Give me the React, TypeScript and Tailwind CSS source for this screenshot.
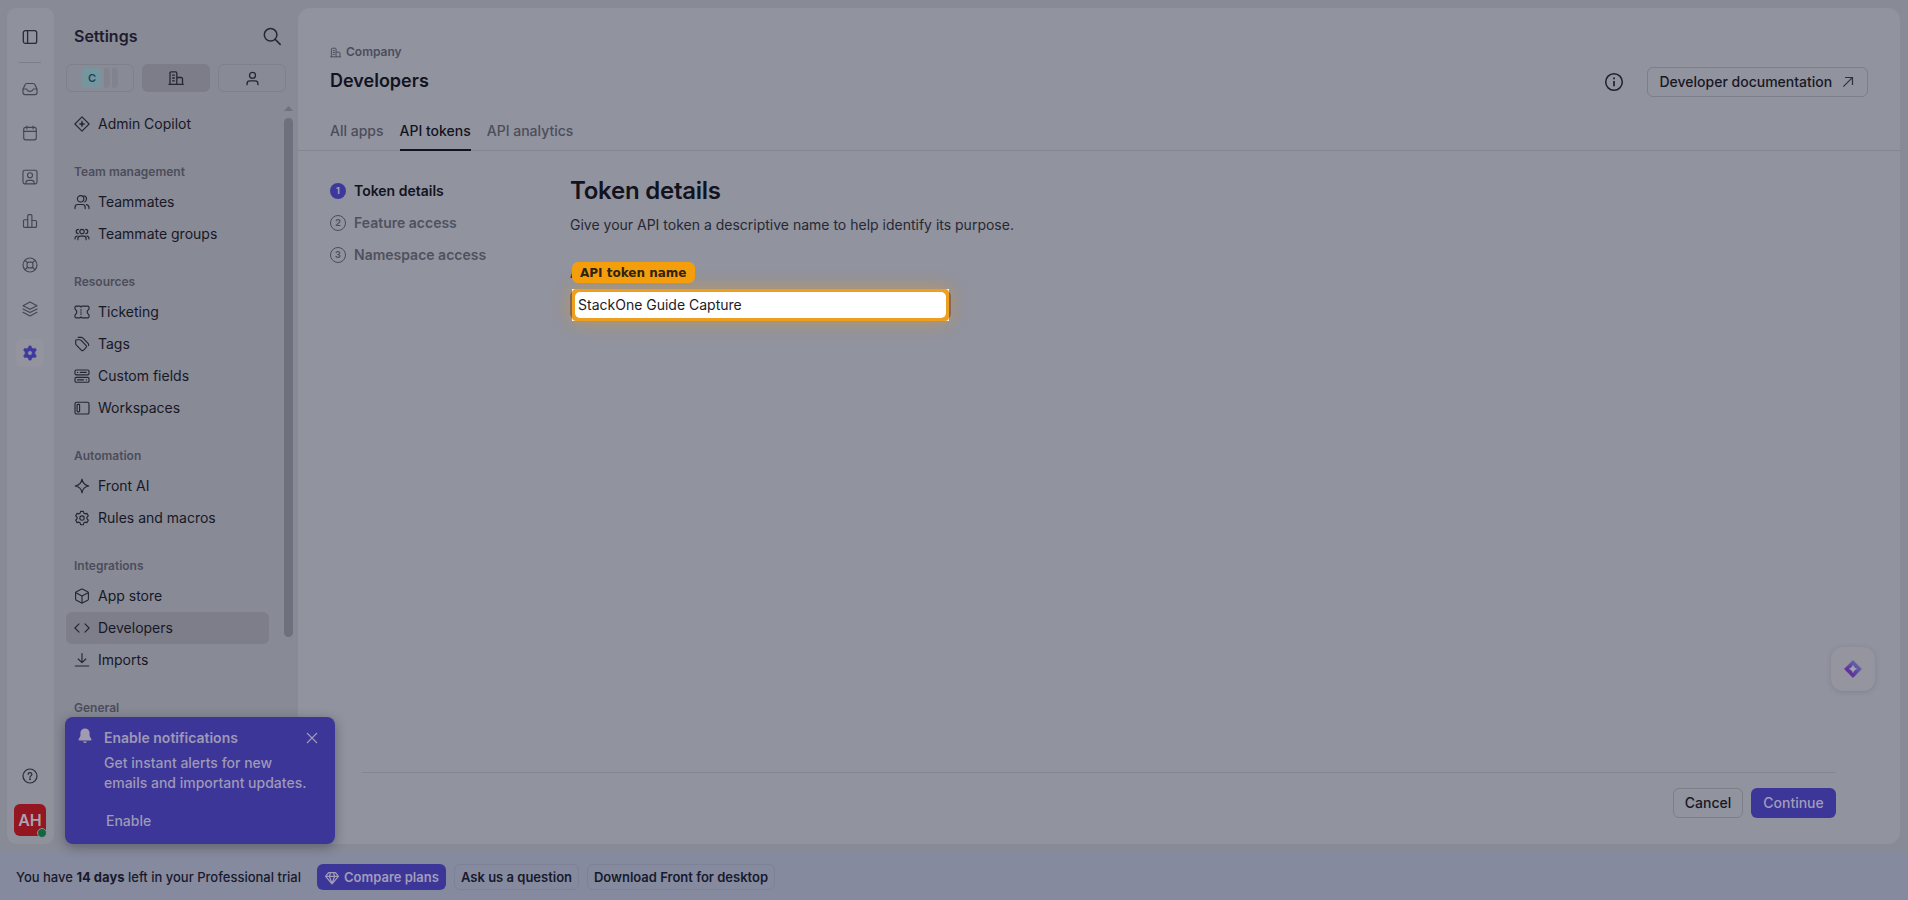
import React from "react";

type IconProps = { className?: string; children?: React.ReactNode; sw?: number };

function Icon({ className = "size-4", children, sw = 1.15 }: IconProps) {
  return (
    <svg
      viewBox="0 0 16 16"
      fill="none"
      stroke="currentColor"
      strokeWidth={sw}
      strokeLinecap="round"
      strokeLinejoin="round"
      className={`shrink-0 ${className}`}
    >
      {children}
    </svg>
  );
}

const GEAR =
  "M6.6 1.3h2.8l.5 1.9 1.1.65 1.9-.5 1.4 2.4L12.9 7.3v1.4l1.4 1.55-1.4 2.4-1.9-.5-1.1.65-.5 1.9H6.6l-.5-1.9L5 12.15l-1.9.5-1.4-2.4L3.1 8.7V7.3L1.7 5.75l1.4-2.4 1.9.5 1.1-.65z";

const ICONS = {
  panel: (
    <>
      <rect x="1.3" y="1.6" width="13.4" height="12.8" rx="2.2" />
      <path d="M5.6 1.6v12.8" />
    </>
  ),
  inbox: (
    <>
      <path d="M1 8.3 3 3.800Q3.500 2.500 4.900 2.500h6.200q1.400 0 1.900 1.300l2 4.500v3.300q0 2-2 2H3q-2 0-2-2z" />
      <path d="M1.200 8h3q.6 0 .9.8.7 1.600 2.900 1.600t2.900-1.600q.3-.8.9-.8h3" />
    </>
  ),
  calendar: (
    <>
      <rect x="1.7" y="2.4" width="12.6" height="12.4" rx="2" />
      <path d="M1.7 6.3h12.6M4.9 1v2.8M11.1 1v2.8" />
    </>
  ),
  contact: (
    <>
      <rect x="1" y="1.2" width="14" height="13.6" rx="1.8" />
      <circle cx="8" cy="6.2" r="2.5" />
      <path d="M3.9 14.6v-.9q0-2.4 2.4-2.4h3.4q2.4 0 2.4 2.4v.9" />
    </>
  ),
  chart: (
    <>
      <path d="M5.7 14.4H2.5q-1 0-1-1V7.7q0-1 1-1h3.2" />
      <path d="M5.7 14.4V2.6q0-1 1-1h2.2q1 0 1 1v11.8z" />
      <path d="M9.9 7.5h3.6q1 0 1 1v4.9q0 1-1 1H9.9" />
    </>
  ),
  ring: (
    <>
      <circle cx="8" cy="8" r="7" />
      <rect x="5.1" y="5.1" width="5.8" height="5.8" rx="2" />
      <path d="m3 3.4 2.6 2.3M13 3.4l-2.6 2.3M3 12.6l2.6-2.3M13 12.6l-2.6-2.3" />
    </>
  ),
  layers: (
    <>
      <path d="M8 1.1 15 4.7 8 8.3 1 4.7z" />
      <path d="m1 8 7 3.5L15 8M1 11.3l7 3.6 7-3.6" />
    </>
  ),
  help: (
    <>
      <circle cx="8" cy="8" r="7" />
      <path d="M6.1 6.4Q6.2 4.6 8 4.6t1.9 1.7Q9.9 7.4 8.7 8 8 8.4 8 9.3" />
      <circle cx="8" cy="11.3" r=".4" fill="currentColor" />
    </>
  ),
  building: (
    <>
      <path d="M2 14.2V3q0-1.2 1.2-1.2h4.4q1.2 0 1.2 1.2v11.2M8.8 7.5h4.5q1.2 0 1.2 1.2v5.5M.9 14.3h14.4" />
      <path d="M4.6 5.2h1.8M4.6 8h1.8M4.6 10.8h1.8" />
    </>
  ),
  person: (
    <>
      <circle cx="8" cy="4.6" r="3.2" />
      <path d="M2.2 14.6v-1q0-3 3-3h5.6q3 0 3 3v1" />
    </>
  ),
  copilot: (
    <>
      <path d="M8 .9 15.1 8 8 15.1.9 8z" />
      <path d="M8 5.1 8.8 7.2 10.9 8 8.8 8.8 8 10.9 7.2 8.8 5.1 8 7.2 7.2z" fill="currentColor" strokeWidth=".5" />
    </>
  ),
  teammates: (
    <>
      <circle cx="6.6" cy="4.8" r="3.2" />
      <path d="M1 14.6v-1.2q0-2.900 2.900-2.900h4.400q2.900 0 2.900 2.900v1.200M10 1.700q2.500.6 2.500 3.100T10.600 8M12.400 10.600q2.600.5 2.600 3v1" />
    </>
  ),
  groups: (
    <>
      <circle cx="8" cy="5.6" r="2.2" />
      <path d="M3.9 13.7v-1.2q0-2.4 2.4-2.4h3.4q2.4 0 2.4 2.4v1.2M4.4 3.4Q2.2 3.5 2.2 5.5t2 2.1M11.6 3.4q2.2.1 2.2 2.1t-2 2.1M3.2 10Q1 10.3 1 12.6v.3M12.8 10q2.2.3 2.2 2.6v.3" />
    </>
  ),
  ticket: (
    <>
      <path d="M2.200 2.100h3.600q.5 0 .7.4l.5.7.5-.7q.2-.4.7-.4h5.600q1.200 0 1.200 1.200v1.500q0 .6-.6 1-1.200.7-1.200 2.200t1.200 2.200q.6.4.6 1v1.500q0 1.200-1.200 1.200H8.200q-.5 0-.7-.4l-.5-.7-.5.7q-.2.4-.7.4H2.200Q1 13.900 1 12.700v-1.500q0-.6.600-1 1.200-.7 1.200-2.200T1.600 5.800Q1 5.400 1 4.800V3.300q0-1.200 1.200-1.200z" />
      <path d="M7 5.600v.6M7 7.700v.6M7 9.800v.6" />
    </>
  ),
  tags: (
    <>
      <path d="M1.700 4.600v3.100q0 .7.500 1.200l5.300 5.400q.9.800 1.800 0l2.900-2.900q.8-.9 0-1.800L6.900 4.200q-.5-.5-1.200-.5H2.700q-1 0-1 .9z" />
      <path d="M4.200 1.400h3.400q.6 0 1.100.5l5.400 5.500q.9.900.4 2" />
    </>
  ),
  fields: (
    <>
      <rect x="1" y="2" width="14" height="4.9" rx="1.3" />
      <rect x="1" y="9.3" width="14" height="4.9" rx="1.3" />
      <path d="M3.500 4.400h.2M6.300 4.400h6M3.500 11.800h6M12.300 11.800h.2" />
    </>
  ),
  workspaces: (
    <>
      <rect x="1" y="2.2" width="14" height="11.8" rx="1.6" />
      <rect x="3.1" y="4.4" width="2.5" height="7.4" rx=".7" />
    </>
  ),
  sparkle: <path d="M8 1.200Q8.900 7.100 14.800 8 8.900 8.900 8 14.800 7.100 8.900 1.200 8 7.100 7.100 8 1.200z" />,
  gear: (
    <>
      <path d={GEAR} />
      <circle cx="8" cy="8" r="2.2" />
    </>
  ),
  box: (
    <>
      <path d="M7.200 1.300q.8-.4 1.600 0l4.800 2.500q.8.500.8 1.300v5.800q0 .8-.8 1.300l-4.800 2.500q-.8.400-1.600 0l-4.800-2.500q-.8-.5-.8-1.300V5.100q0-.8.800-1.300z" />
      <path d="M1.900 4.700 8 7.900l6.100-3.200M8 7.900v6.900" />
    </>
  ),
  code: <path d="M5 3.800.9 8 5 12.200M11 3.800 15.100 8 11 12.200" />,
  download: <path d="M8 1.500v9M4.200 7 8 10.700 11.800 7M1.300 14h13.400" />,
};

type IconName = keyof typeof ICONS;

const RAIL: IconName[] = ["inbox", "calendar", "contact", "chart", "ring", "layers"];

const SECTIONS: { title?: string; items: { label: string; icon: IconName; active?: boolean }[] }[] = [
  { items: [{ label: "Admin Copilot", icon: "copilot" }] },
  {
    title: "Team management",
    items: [
      { label: "Teammates", icon: "teammates" },
      { label: "Teammate groups", icon: "groups" },
    ],
  },
  {
    title: "Resources",
    items: [
      { label: "Ticketing", icon: "ticket" },
      { label: "Tags", icon: "tags" },
      { label: "Custom fields", icon: "fields" },
      { label: "Workspaces", icon: "workspaces" },
    ],
  },
  {
    title: "Automation",
    items: [
      { label: "Front AI", icon: "sparkle" },
      { label: "Rules and macros", icon: "gear" },
    ],
  },
  {
    title: "Integrations",
    items: [
      { label: "App store", icon: "box" },
      { label: "Developers", icon: "code", active: true },
      { label: "Imports", icon: "download" },
    ],
  },
  { title: "General", items: [] },
];

const STEPS = ["Token details", "Feature access", "Namespace access"];

function Rail() {
  return (
    <nav className="flex w-[47px] shrink-0 flex-col items-center rounded-[9px] bg-[#8f919c] pt-[21px] pr-px pb-2 text-[#454655]">
      <Icon className="size-4 text-[#2a2b38]" sw={1.3}>{ICONS.panel}</Icon>
      <div className="mt-[17px] h-px w-[22px] bg-[#7d7e8a]" />
      <div className="mt-[18px] flex flex-col items-center gap-7">
        {RAIL.map((name) => (
          <Icon key={name}>{ICONS[name]}</Icon>
        ))}
      </div>
      <div className="mt-[22px] flex size-7 items-center justify-center rounded-md bg-[#94949f]">
        <svg viewBox="0 0 16 16" className="size-4 text-[#3f399f]" fill="currentColor">
          <path
            fillRule="evenodd"
            stroke="currentColor"
            strokeWidth=".6"
            strokeLinejoin="round"
            d="M7 .9h2l.8 2.200 1.300.7 2.300-.4 1 1.700L12.900 7v2l1.500 1.900-1 1.700-2.300-.4-1.300.7L9 15.100H7l-.8-2.200-1.300-.7-2.300.4-1-1.700L3.100 9V7L1.600 5.100l1-1.700 2.300.4 1.300-.7zM8 5.700a2.300 2.300 0 1 0 0 4.600 2.300 2.300 0 0 0 0-4.600z"
          />
        </svg>
      </div>
      <Icon className="mt-auto size-4 text-[#2a2b38]" sw={1.2}>{ICONS.help}</Icon>
      <div className="relative mt-5 flex size-8 items-center justify-center rounded-md bg-[#941620] text-base font-semibold text-[#a9a3b0]">
        AH
        <span className="absolute -right-[1px] -bottom-[2px] size-[10px] rounded-full border-[1.5px] border-[#8f919c] bg-[#14663f]" />
      </div>
    </nav>
  );
}

function Sidebar() {
  return (
    <aside className="flex w-[244px] shrink-0 flex-col pl-3">
      <div className="flex h-14 items-center justify-between pr-4 pl-2">
        <h2 className="text-base font-semibold text-[#1e1d2c]">Settings</h2>
        <svg viewBox="0 0 20 20" className="size-5 text-[#262735]" fill="none" stroke="currentColor" strokeWidth="1.5" strokeLinecap="round">
          <circle cx="8.6" cy="8.8" r="6.3" />
          <path d="m13.200 13.400 5 5" />
        </svg>
      </div>
      <div className="flex gap-2">
        <div className="flex h-7 w-[68px] items-center justify-center rounded-md border border-[#7f808c]">
          <span className="flex size-5 items-center justify-center rounded bg-[#76969f] text-[11px] font-semibold text-[#164554]">C</span>
          <span className="ml-[2px] h-5 w-[6px] rounded-r bg-[#82838f]" />
          <span className="ml-[2px] h-5 w-[6px] rounded-r bg-[#82838f]" />
        </div>
        <div className="flex h-7 w-[68px] items-center justify-center rounded-md bg-[#7c7d89] text-[#262735]">
          <Icon sw={1.3}>{ICONS.building}</Icon>
        </div>
        <div className="flex h-7 w-[68px] items-center justify-center rounded-md border border-[#7f808c] text-[#262735]">
          <Icon className="size-[15px]" sw={1.4}>{ICONS.person}</Icon>
        </div>
      </div>
      <div className="mt-[14px] flex min-h-0 flex-1 justify-between overflow-hidden">
        <div className="w-[203px] pt-[2px]">
          {SECTIONS.map((s, i) => (
            <div key={i}>
              {s.title && (
                <h3 className="pt-6 pb-1.5 pl-2 text-xs leading-4 font-semibold text-[#4c4d5b]">{s.title}</h3>
              )}
              {s.items.map((item) => (
                <div
                  key={item.label}
                  className={`flex h-8 items-center gap-2 rounded-md px-2 text-sm text-[#171825] ${item.active ? "bg-[#7d7e8a]" : ""}`}
                >
                  <Icon className="size-4 text-[#262735]">{ICONS[item.icon]}</Icon>
                  {item.label}
                </div>
              ))}
            </div>
          ))}
        </div>
        <div className="flex w-[14px] flex-col items-start">
          <div className="mb-[7px] h-[5px] w-[9px] bg-[#70717d] [clip-path:polygon(50%_0,100%_100%,0_100%)]" />
          <div className="h-[519px] w-[9px] rounded-full bg-[#6f707d]" />
        </div>
      </div>
    </aside>
  );
}

function Header() {
  return (
    <header className="flex h-[143px] shrink-0 items-stretch justify-between border-b border-[#848591] pr-8 pl-8">
      <div className="flex flex-col">
        <div className="mt-9 flex h-4 items-center gap-[5px] text-xs font-semibold text-[#4c4d5b]">
          <Icon className="size-[11px]" sw={1.4}>{ICONS.building}</Icon>
          Company
        </div>
        <h1 className="mt-[9px] text-lg leading-6 font-semibold text-[#12131f]">Developers</h1>
        <div className="mt-auto -mb-px flex gap-4 text-sm font-medium text-[#4c4d5b]">
          <span className="h-[30px]">All apps</span>
          <span className="h-[30px] border-b-2 border-[#12131f] text-[#12131f]">API tokens</span>
          <span className="h-[30px]">API analytics</span>
        </div>
      </div>
      <div className="mt-[59px] flex h-[30px] items-center gap-[23px]">
        <svg viewBox="0 0 20 20" className="size-5 text-[#1f202d]" fill="none" stroke="currentColor" strokeWidth="1.5">
          <circle cx="10" cy="10" r="8.3" />
          <path d="M10 9v5.300M10 5.600v1.600" strokeWidth="1.7" />
        </svg>
        <button className="flex h-[30px] w-[221px] items-center justify-between rounded-md border border-[#7d7e8a] pr-[13px] pl-[11.5px] text-sm font-medium text-[#171825]">
          Developer documentation
          <svg viewBox="0 0 12 12" className="size-3 text-[#2f303d]" fill="none" stroke="currentColor" strokeWidth="1.2">
            <path d="m1.300 10.700 9-9M3 1.500h7.500V9" />
          </svg>
        </button>
      </div>
    </header>
  );
}

function Steps() {
  return (
    <ol className="flex w-[240px] shrink-0 flex-col gap-3 pt-[30px]">
      {STEPS.map((label, i) => (
        <li key={label} className="flex h-5 items-center gap-2 text-sm font-semibold text-[#50515f]">
          {i === 0 ? (
            <span className="flex size-4 items-center justify-center rounded-full bg-[#3f389c] text-[9px] font-bold text-[#a3a2b4]">1</span>
          ) : (
            <span className="flex size-4 items-center justify-center rounded-full border border-[#4c4d5b] text-[9px] font-bold">{i + 1}</span>
          )}
          <span className={i === 0 ? "text-[#12131f]" : ""}>{label}</span>
        </li>
      ))}
    </ol>
  );
}

function TokenForm() {
  return (
    <div className="pt-6">
      <h2 className="text-2xl leading-8 font-semibold tracking-[-0.01em] text-[#12131f]">Token details</h2>
      <p className="mt-2 text-sm leading-5 text-[#272835]">
        Give your API token a descriptive name to help identify its purpose.
      </p>
      <div className="relative mt-7 h-[26px] text-sm leading-5 text-[#272835]">
        A
        <span className="absolute -top-px left-[2px] flex h-[21px] items-center rounded-md bg-[#f59e0b] px-2 font-['DejaVu_Sans'] text-xs font-bold text-[#2e2412]">
          API token name
        </span>
      </div>
      {/* field with the highlight ring around it */}
      <div className="h-8 w-[381px] rounded-lg border-x-2 border-[#6c5a6c]">
        <div className="h-8 w-[377px] bg-white shadow-[0_0_18px_rgba(245,158,11,0.45)]">
          <div className="flex h-8 items-center rounded-[4px] bg-[#ee9f20] px-[3px]">
            <div className="flex h-[26px] flex-1 items-center rounded-[5px] bg-white pl-[3px] text-sm text-[#1b1c26]">
              StackOne Guide Capture
            </div>
          </div>
        </div>
      </div>
    </div>
  );
}

function Toast() {
  return (
    <div className="absolute top-[717px] left-[65px] flex h-[127px] w-[270px] rounded-lg bg-[#3d3699] pl-[13px] text-sm font-semibold text-[#9d99b6] shadow-[0_3px_12px_rgba(30,30,50,0.4)]">
      <svg viewBox="0 0 14 16" className="mt-[11px] h-4 w-[14px] text-[#9e9cae]" fill="currentColor">
        <path d="M7 .5c-2.600 0-4.600 1.900-4.600 4.600v3L.6 11.300c-.3.600 0 1.100.6 1.100h11.600c.6 0 .9-.5.600-1.100L11.600 8.100v-3C11.600 2.400 9.600.5 7 .5zM5 13.400h4c-.3.900-1 1.500-2 1.500s-1.700-.6-2-1.500z" />
      </svg>
      <div className="ml-3 flex flex-col pt-[11px]">
        <span className="leading-5">Enable notifications</span>
        <span className="mt-[5px] leading-5 font-medium">
          Get instant alerts for new
          <br />
          emails and important updates.
        </span>
        <span className="mt-[18px] ml-[2px] leading-5 font-medium">Enable</span>
      </div>
      <svg viewBox="0 0 12 12" className="absolute top-[15px] right-[17px] size-3" fill="none" stroke="currentColor" strokeWidth="1.2">
        <path d="m1 1 10 10M11 1 1 11" />
      </svg>
    </div>
  );
}

function TrialBar() {
  return (
    <footer className="flex h-[48px] shrink-0 items-center bg-[#868a9f] px-4 pt-[2px] text-[13px] font-medium text-[#171a2c]">
      <span className="w-[301px] pt-px">
        You have <b className="font-bold">14 days</b> left in your Professional trial
      </span>
      <button className="flex h-[26px] w-[129px] items-center gap-[5px] rounded-md bg-[#3d3699] pt-px pl-2 font-semibold text-[#a19db8]">
        <Icon className="size-[14px]" sw={1.4}>
          <path d="M4 1.800h8l3.300 4.400L8 14.800.7 6.200zM.9 6.200h14.200M5 6.200l3 8 3-8-1.300-4.200M5 6.200l1.300-4.200" />
        </Icon>
        Compare plans
      </button>
      <button className="ml-2 h-[26px] w-[125px] rounded-md border border-[#7e8296] pt-px font-semibold">Ask us a question</button>
      <button className="ml-2 h-[26px] w-[188px] rounded-md border border-[#7e8296] pt-px font-semibold">Download Front for desktop</button>
    </footer>
  );
}

export default function App() {
  return (
    <div className="relative flex h-[900px] w-[1908px] flex-col overflow-hidden bg-[#888a96] font-[Inter,sans-serif] whitespace-nowrap">
      <div className="flex h-[852px] shrink-0 pt-2 pr-2 pb-2 pl-[7px]">
        <Rail />
        <Sidebar />
        <main className="flex min-w-0 flex-1 flex-col rounded-xl bg-[#91939e]">
          <Header />
          <div className="flex flex-1 pl-8">
            <Steps />
            <TokenForm />
          </div>
          <div className="mr-16 ml-16 flex h-[72px] items-start justify-end gap-2 border-t border-[#848591] pt-[15px] text-sm font-medium">
            <button className="h-[30px] w-[70px] rounded-md border border-[#7d7e8a] text-[#171825]">Cancel</button>
            <button className="h-[30px] w-[85px] rounded-md bg-[#3d3699] text-[#a19db8]">Continue</button>
          </div>
        </main>
      </div>
      <TrialBar />
      <div className="absolute top-[647px] left-[1831px] flex size-11 items-center justify-center rounded-xl bg-[#94959f] shadow-[0_1px_5px_rgba(50,50,70,0.18)]">
        <svg viewBox="0 0 18 18" className="size-[18px]">
          <defs>
            <linearGradient id="spark" x1="0" y1="1" x2="1" y2="0">
              <stop offset=".3" stopColor="#5f2f9c" />
              <stop offset=".75" stopColor="#5f62a8" />
            </linearGradient>
          </defs>
          <path d="M9 .6 17.400 9 9 17.400.6 9z" fill="url(#spark)" stroke="url(#spark)" strokeLinejoin="round" />
          <path d="M9 4.600Q9.900 8.100 13.400 9 9.900 9.900 9 13.400 8.100 9.900 4.600 9 8.100 8.100 9 4.600z" fill="#a3a2ae" />
        </svg>
      </div>
      <Toast />
    </div>
  );
}
